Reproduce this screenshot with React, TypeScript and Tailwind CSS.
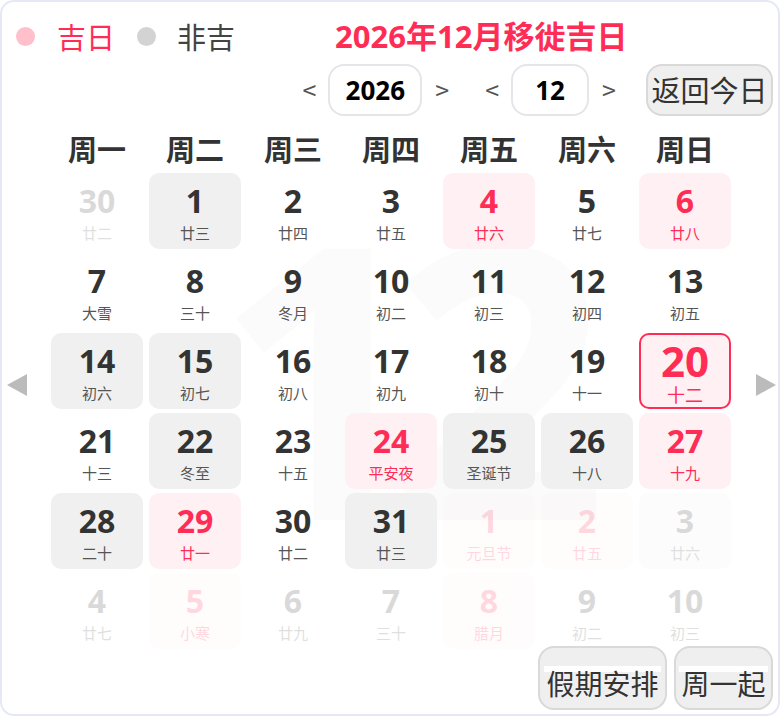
import React from "react";

type Kind = "n" | "g" | "r";
type Day = { d: number; l: string; k: Kind; faded?: boolean; today?: boolean };

const WEEK = ["周一", "周二", "周三", "周四", "周五", "周六", "周日"];

const DAYS: Day[] = [
  { d: 30, l: "廿二", k: "n", faded: true },
  { d: 1, l: "廿三", k: "g" },
  { d: 2, l: "廿四", k: "n" },
  { d: 3, l: "廿五", k: "n" },
  { d: 4, l: "廿六", k: "r" },
  { d: 5, l: "廿七", k: "n" },
  { d: 6, l: "廿八", k: "r" },

  { d: 7, l: "大雪", k: "n" },
  { d: 8, l: "三十", k: "n" },
  { d: 9, l: "冬月", k: "n" },
  { d: 10, l: "初二", k: "n" },
  { d: 11, l: "初三", k: "n" },
  { d: 12, l: "初四", k: "n" },
  { d: 13, l: "初五", k: "n" },

  { d: 14, l: "初六", k: "g" },
  { d: 15, l: "初七", k: "g" },
  { d: 16, l: "初八", k: "n" },
  { d: 17, l: "初九", k: "n" },
  { d: 18, l: "初十", k: "n" },
  { d: 19, l: "十一", k: "n" },
  { d: 20, l: "十二", k: "r", today: true },

  { d: 21, l: "十三", k: "n" },
  { d: 22, l: "冬至", k: "g" },
  { d: 23, l: "十五", k: "n" },
  { d: 24, l: "平安夜", k: "r" },
  { d: 25, l: "圣诞节", k: "g" },
  { d: 26, l: "十八", k: "g" },
  { d: 27, l: "十九", k: "r" },

  { d: 28, l: "二十", k: "g" },
  { d: 29, l: "廿一", k: "r" },
  { d: 30, l: "廿二", k: "n" },
  { d: 31, l: "廿三", k: "g" },
  { d: 1, l: "元旦节", k: "r", faded: true },
  { d: 2, l: "廿五", k: "r", faded: true },
  { d: 3, l: "廿六", k: "g", faded: true },

  { d: 4, l: "廿七", k: "n", faded: true },
  { d: 5, l: "小寒", k: "r", faded: true },
  { d: 6, l: "廿九", k: "n", faded: true },
  { d: 7, l: "三十", k: "n", faded: true },
  { d: 8, l: "腊月", k: "r", faded: true },
  { d: 9, l: "初二", k: "n", faded: true },
  { d: 10, l: "初三", k: "n", faded: true },
];

function DayCell({ day }: { day: Day }) {
  const bg =
    day.k === "g" ? "bg-[#f0f0f0]" : day.k === "r" ? "bg-[#fff0f3]" : "bg-transparent";
  const num = day.k === "r" ? "text-[#ff2d55]" : "text-[#333]";
  const lunar = day.k === "r" ? "text-[#ff2d55]" : "text-[#555]";
  return (
    <div
      className={`relative flex h-[76px] flex-col items-center rounded-[10px] ${bg} ${
        day.today ? "border-2 border-[#ff2d55] pt-[5px]" : "pt-[11px]"
      } ${day.faded ? "opacity-[0.18]" : ""}`}
    >
      <span
        className={`font-['Open_Sans','Noto_Sans_CJK_SC',sans-serif] font-bold ${num} ${
          day.today ? "h-[42px] text-[42px] leading-[42px]" : "h-[34px] text-[32px] leading-[34px]"
        }`}
      >
        {day.d}
      </span>
      <span
        className={`font-['Noto_Sans_CJK_SC',sans-serif] ${lunar} ${
          day.today ? "mt-[0px] text-[18px] leading-[24px]" : "mt-[5px] text-[15px] leading-[20px]"
        }`}
      >
        {day.l}
      </span>
    </div>
  );
}

function Arrow({ dir }: { dir: "l" | "r" }) {
  return (
    <svg width="22" height="24" viewBox="0 0 22 24">
      {dir === "l" ? (
        <polygon points="21,1 21,23 1,12" fill="#bbbbbb" />
      ) : (
        <polygon points="1,1 1,23 21,12" fill="#bbbbbb" />
      )}
    </svg>
  );
}

export default function App() {
  return (
    <div className="h-[716px] w-[780px] overflow-hidden rounded-[14px] border-2 border-[#e6e9f5] bg-white font-['Noto_Sans_CJK_SC',sans-serif]">
      {/* legend + title */}
      <div className="mt-[10px] flex h-[48px] items-center pl-[14px]">
        <span className="h-[19px] w-[19px] rounded-full bg-[#ffc0cb]" />
        <span className="ml-[22px] text-[29px] leading-none text-[#ff2d55]">吉日</span>
        <span className="ml-[22px] h-[19px] w-[19px] rounded-full bg-[#d3d3d3]" />
        <span className="ml-[21px] text-[29px] leading-none text-[#444]">非吉</span>
        <span className="ml-[100px] font-['Open_Sans','Noto_Sans_CJK_SC',sans-serif] text-[31px] font-bold leading-none text-[#ff2d55]">
          2026年12月移徙吉日
        </span>
      </div>

      {/* year / month pickers */}
      <div className="mt-[4px] flex h-[52px] items-center justify-end pr-[5px]">
        <span className="text-[25px] text-[#555]">&lt;</span>
        <div className="ml-[12px] flex h-[52px] w-[94px] items-center justify-center rounded-[16px] border-2 border-[#e5e5ea] font-['Open_Sans',sans-serif] text-[26px] font-bold text-black">
          2026
        </div>
        <span className="ml-[13px] text-[25px] text-[#555]">&gt;</span>
        <span className="ml-[36px] text-[25px] text-[#555]">&lt;</span>
        <div className="ml-[12px] flex h-[52px] w-[78px] items-center justify-center rounded-[16px] border-2 border-[#e5e5ea] font-['Open_Sans',sans-serif] text-[26px] font-bold text-black">
          12
        </div>
        <span className="ml-[13px] text-[25px] text-[#555]">&gt;</span>
        <button className="ml-[30px] flex h-[52px] w-[127px] items-center justify-center rounded-[16px] border-2 border-[#d9d9d9] bg-[#efefef] text-[29px] text-[#333]">
          返回今日
        </button>
      </div>

      {/* weekdays */}
      <div className="ml-[49px] mt-[14px] grid h-[36px] w-[680px] grid-cols-7 gap-x-[6px]">
        {WEEK.map((w) => (
          <div key={w} className="flex items-center justify-center text-[29px] font-bold leading-none text-[#333]">
            {w}
          </div>
        ))}
      </div>

      {/* month grid */}
      <div className="mt-[7px] flex">
        <div className="flex w-[49px] items-start pl-[4px] pt-[200px]">
          <Arrow dir="l" />
        </div>
        <div className="relative w-[680px]">
          <div className="pointer-events-none absolute inset-x-0 top-[10px] select-none text-center font-['Open_Sans',sans-serif] text-[380px] font-bold leading-none tracking-[-40px] text-[#fbfbfb]">
            12
          </div>
          <div className="relative grid grid-cols-7 gap-x-[6px] gap-y-[4px]">
            {DAYS.map((d, i) => (
              <DayCell key={i} day={d} />
            ))}
          </div>
        </div>
        <div className="flex w-[47px] items-start justify-end pr-[1px] pt-[200px]">
          <Arrow dir="r" />
        </div>
      </div>

      {/* footer buttons */}
      <div className="mt-[-3px] flex justify-end gap-[7px] pr-[5px]">
        <button className="flex h-[64px] w-[129px] items-end justify-center rounded-[16px] border-2 border-[#d9d9d9] bg-[#efefef] pb-[8px] text-[28px] leading-[34px] text-[#333]">
          <span className="bg-[linear-gradient(#fff_0,#fff_6px,transparent_6px)] px-[2px]">假期安排</span>
        </button>
        <button className="flex h-[64px] w-[99px] items-end justify-center rounded-[16px] border-2 border-[#d9d9d9] bg-[#efefef] pb-[8px] text-[28px] leading-[34px] text-[#333]">
          <span className="bg-[linear-gradient(#fff_0,#fff_6px,transparent_6px)] px-[2px]">周一起</span>
        </button>
      </div>
    </div>
  );
}
